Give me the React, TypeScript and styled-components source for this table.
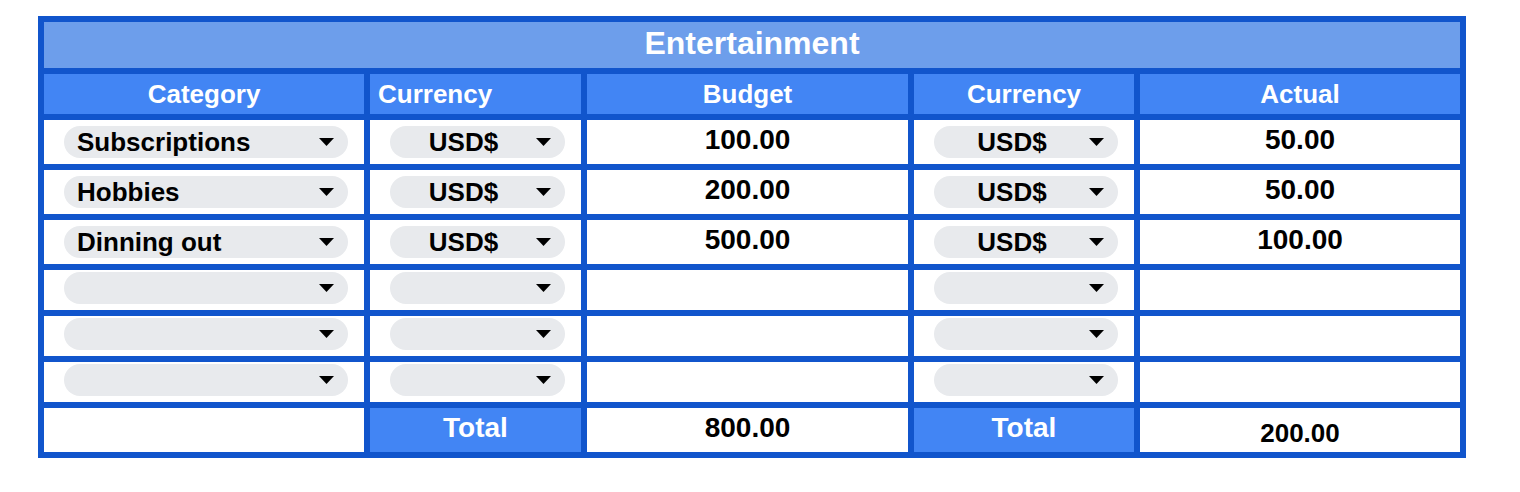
import { Fragment } from "react";
import styled, { createGlobalStyle } from "styled-components";

const Colors = {
  Line: "#1155cc",
  Title: "#6d9eeb",
  Header: "#4285f4",
  Chip: "#e8eaed",
  Ink: "#000000",
  White: "#ffffff",
};

const GlobalStyle = createGlobalStyle`
  body {
    margin: 0;
    background: ${Colors.White};
    font-family: "Liberation Sans", Arial, sans-serif;
  }
`;

const Page = styled.div`
  padding: 16px 38px;
`;

const Sheet = styled.div`
  display: grid;
  width: 1428px;
  box-sizing: border-box;
  grid-template-columns: 320px 211px 321px 220px 320px;
  grid-template-rows: 46px 40px 44px 44px 44px 40px 40px 40px 44px;
  gap: 6px;
  padding: 6px;
  background: ${Colors.Line};
`;

const TitleCell = styled.div`
  grid-column: 1 / -1;
  display: flex;
  align-items: center;
  justify-content: center;
  padding-bottom: 4px;
  background: ${Colors.Title};
  color: ${Colors.White};
  font-size: 32px;
  font-weight: 700;
`;

const HeadCell = styled.div<{ $align?: "left" | "center" }>`
  display: flex;
  align-items: center;
  justify-content: ${({ $align }) => ($align === "left" ? "flex-start" : "center")};
  padding: 0 8px;
  background: ${Colors.Header};
  color: ${Colors.White};
  font-size: 26px;
  font-weight: 700;
`;

const ChipCell = styled.div<{ $compact?: boolean }>`
  display: flex;
  align-items: flex-start;
  padding: ${({ $compact }) => ($compact ? "2px" : "6px")} 16px 0 20px;
  background: ${Colors.White};
`;

const Chip = styled.div`
  display: flex;
  align-items: center;
  flex: 1;
  height: 32px;
  padding: 0 14px 0 13px;
  border-radius: 16px;
  background: ${Colors.Chip};
`;

const ChipLabel = styled.span<{ $align?: "left" | "center" }>`
  flex: 1;
  text-align: ${({ $align }) => $align || "left"};
  color: ${Colors.Ink};
  font-size: 26px;
  font-weight: 700;
  line-height: 32px;
  white-space: nowrap;
`;

const Caret = styled.svg`
  flex-shrink: 0;
  margin-left: 12px;
`;

const ValueCell = styled.div<{ $size?: number; $top?: number }>`
  display: flex;
  justify-content: center;
  align-items: flex-start;
  padding-top: ${({ $top }) => $top ?? 4}px;
  background: ${Colors.White};
  color: ${Colors.Ink};
  font-size: ${({ $size }) => $size || 28}px;
  font-weight: 700;
`;

const TotalCell = styled.div`
  display: flex;
  justify-content: center;
  align-items: flex-start;
  padding-top: 4px;
  background: ${Colors.Header};
  color: ${Colors.White};
  font-size: 28px;
  font-weight: 700;
`;

const BlankCell = styled.div`
  background: ${Colors.White};
`;

const Dropdown = ({
  value,
  align,
  compact,
}: {
  value?: string;
  align?: "left" | "center";
  compact?: boolean;
}) => (
  <ChipCell $compact={compact}>
    <Chip>
      <ChipLabel $align={align}>{value}</ChipLabel>
      <Caret width="15" height="8" viewBox="0 0 15 8">
        <polygon points="0,0 15,0 7.5,8" fill={Colors.Ink} />
      </Caret>
    </Chip>
  </ChipCell>
);

const rows = [
  { category: "Subscriptions", budget: "100.00", actual: "50.00" },
  { category: "Hobbies", budget: "200.00", actual: "50.00" },
  { category: "Dinning out", budget: "500.00", actual: "100.00" },
  null,
  null,
  null,
];

export default function App() {
  return (
    <>
      <GlobalStyle />
      <Page>
        <Sheet>
          <TitleCell>Entertainment</TitleCell>

          <HeadCell>Category</HeadCell>
          <HeadCell $align="left">Currency</HeadCell>
          <HeadCell>Budget</HeadCell>
          <HeadCell>Currency</HeadCell>
          <HeadCell>Actual</HeadCell>

          {rows.map((row, index) => (
            <Fragment key={index}>
              {row ? (
                <>
                  <Dropdown value={row.category} />
                  <Dropdown value="USD$" align="center" />
                  <ValueCell>{row.budget}</ValueCell>
                  <Dropdown value="USD$" align="center" />
                  <ValueCell>{row.actual}</ValueCell>
                </>
              ) : (
                <>
                  <Dropdown compact />
                  <Dropdown compact />
                  <BlankCell />
                  <Dropdown compact />
                  <BlankCell />
                </>
              )}
            </Fragment>
          ))}

          <BlankCell />
          <TotalCell>Total</TotalCell>
          <ValueCell>800.00</ValueCell>
          <TotalCell>Total</TotalCell>
          <ValueCell $size={26} $top={10}>
            200.00
          </ValueCell>
        </Sheet>
      </Page>
    </>
  );
}
